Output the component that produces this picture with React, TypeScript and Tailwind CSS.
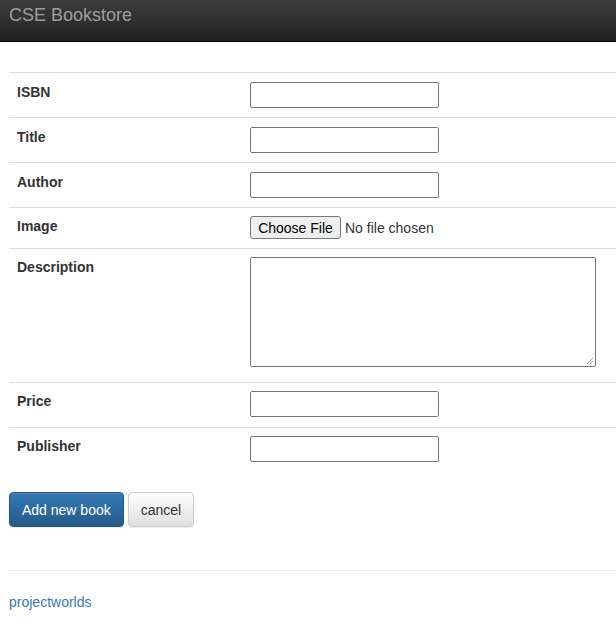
import React from "react";

const font = { fontFamily: '"Liberation Sans", Arial, sans-serif' };

function Row({ label, h, pt = "pt-[9px]", children }: { label: string; h: string; pt?: string; children: React.ReactNode }) {
  return (
    <div className={`flex border-t border-[#dddddd] ${h}`}>
      <div className={`w-[241px] shrink-0 pl-[8px] ${pt} text-[14px] leading-[20px] font-bold text-[#333333]`}>{label}</div>
      <div className={pt}>{children}</div>
    </div>
  );
}

function TextInput() {
  return <div className="w-[189px] h-[26px] border border-[#767676] rounded-[2px] bg-white" />;
}

export default function App() {
  return (
    <div className="w-[616px] h-[640px] bg-white overflow-hidden text-[#333333]" style={font}>
      <div className="h-[42px] border-b border-[#080808] bg-gradient-to-b from-[#3c3c3c] to-[#222222] pl-[9px] pt-[4px]">
        <span className="text-[18px] leading-[20px] text-[#9d9d9d]">CSE Bookstore</span>
      </div>
      <div className="pl-[9px]">
        <div className="mt-[30px]">
          <Row label="ISBN" h="h-[45px]"><TextInput /></Row>
          <Row label="Title" h="h-[45px]"><TextInput /></Row>
          <Row label="Author" h="h-[45px]"><TextInput /></Row>
          <Row label="Image" h="h-[41px]" pt="pt-[8px]">
            <div className="flex items-center text-[14px] leading-[20px]">
              <span className="inline-flex items-center justify-center w-[91px] h-[23px] border border-[#767676] rounded-[3px] bg-[#efefef] text-black">Choose File</span>
              <span className="ml-[4px] text-[#333333]">No file chosen</span>
            </div>
          </Row>
          <Row label="Description" h="h-[134px]" pt="pt-[8px]">
            <div className="relative w-[346px] h-[110px] border border-[#767676] rounded-[2px] bg-white">
              <svg className="absolute right-[1px] bottom-[1px]" width="8" height="8" viewBox="0 0 8 8">
                <path d="M7 1 L1 7 M7 4 L4 7" stroke="#999" strokeWidth="1" />
              </svg>
            </div>
          </Row>
          <Row label="Price" h="h-[45px]" pt="pt-[8px]"><TextInput /></Row>
          <Row label="Publisher" h="h-[45px]" pt="pt-[8px]"><TextInput /></Row>
        </div>
        <div className="mt-[20px] flex gap-[4px]">
          <button className="h-[35px] px-[12px] text-[14px] leading-[20px] text-white rounded-[4px] border border-[#245580] bg-gradient-to-b from-[#337ab7] to-[#265a88] shadow-[inset_0_1px_0_rgba(255,255,255,0.15),0_1px_1px_rgba(0,0,0,0.075)]">Add new book</button>
          <button className="h-[35px] px-[12px] text-[14px] leading-[20px] text-[#333333] rounded-[4px] border border-[#cccccc] bg-gradient-to-b from-white to-[#e0e0e0] shadow-[inset_0_1px_0_rgba(255,255,255,0.15),0_1px_1px_rgba(0,0,0,0.075)]">cancel</button>
        </div>
        <div className="mt-[43px] border-t border-[#eeeeee]" />
        <div className="mt-[21px] text-[14px] leading-[20px] text-[#337ab7]">projectworlds</div>
      </div>
    </div>
  );
}
